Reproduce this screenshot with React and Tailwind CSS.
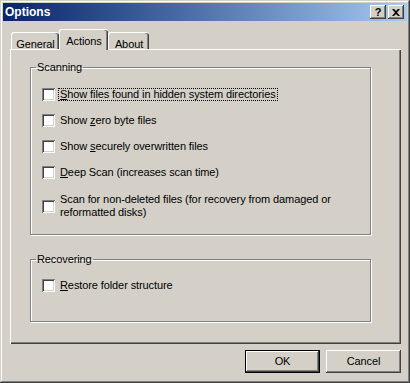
import React from 'react';

const raised =
  'shadow-[inset_-1px_-1px_0_#404040,inset_1px_1px_0_#ffffff,inset_-2px_-2px_0_#808080]';

const Check = ({ children, focused }) => (
  <div className="flex items-center">
    <span className="w-[13px] h-[13px] shrink-0 bg-white shadow-[inset_1px_1px_0_#808080,inset_-1px_-1px_0_#ffffff,inset_2px_2px_0_#404040,inset_-2px_-2px_0_#d4d0c8]" />
    <span
      className={
        'ml-[3px] px-[1px] leading-[11px] py-0 border border-dotted ' +
        (focused ? 'border-black' : 'border-transparent')
      }
    >
      {children}
    </span>
  </div>
);

const Tab = ({ label, active, width }) => (
  <div
    className={
      'flex justify-center rounded-t-[3px] border-t border-l border-white bg-[#d4d0c8] shadow-[inset_-1px_0_0_#404040,inset_-2px_0_0_#808080] ' +
      width +
      (active ? ' h-[21px] mb-[-1px] pt-[3px]' : ' h-[17px] pt-[3px]')
    }
  >
    {label}
  </div>
);

const Group = ({ title, className, children }) => (
  <fieldset
    className={
      'w-[341px] px-[5px] border border-[#808080] shadow-[1px_1px_0_#ffffff,inset_1px_1px_0_#ffffff] ' +
      className
    }
  >
    <legend className="px-[1px] leading-[13px]">{title}</legend>
    {children}
  </fieldset>
);

export default function App() {
  return (
    <div className="w-[410px] h-[383px] bg-[#d4d0c8] p-[3px] flex flex-col text-[11px] tracking-[-0.1px] text-black [font-family:'Liberation_Sans',Arial,sans-serif] shadow-[inset_-1px_-1px_0_#404040,inset_1px_1px_0_#d4d0c8,inset_-2px_-2px_0_#808080,inset_2px_2px_0_#ffffff]">
      {/* Title bar */}
      <div className="h-[18px] flex items-start justify-between bg-gradient-to-r from-[#0a246a] to-[#a6caf0] pl-[2px] pr-[3px]">
        <span className="text-white font-bold text-[12px] leading-[18px] tracking-normal">Options</span>
        <div className="flex gap-[2px] mt-[2px]">
          <span className={'w-[16px] h-[14px] bg-[#d4d0c8] flex items-center justify-center font-bold text-[11px] leading-none ' + raised}>
            ?
          </span>
          <span className={'w-[16px] h-[14px] bg-[#d4d0c8] flex items-center justify-center ' + raised}>
            <svg width="8" height="7" viewBox="0 0 8 7">
              <path d="M0 0h2l2 2 2-2h2L5 3.5 8 7H6L4 5 2 7H0l3-3.5z" fill="#000" />
            </svg>
          </span>
        </div>
      </div>

      {/* Tabs */}
      <div className="relative z-10 mt-[8px] ml-[8px] h-[20px] flex items-end">
        <Tab label="General" width="w-[48px]" />
        <Tab label="Actions" width="w-[49px]" active />
        <Tab label="About" width="w-[41px]" />
      </div>

      {/* Panel */}
      <div className="ml-[7px] w-[391px] h-[295px] pt-[12px] pl-[20px] shadow-[inset_1px_1px_0_#ffffff,inset_-1px_-1px_0_#404040,inset_-2px_-2px_0_#808080]">
        <Group title="Scanning" className="pt-[14px] pb-[14px]">
          <div className="pl-[6px] flex flex-col gap-[13px]">
            <Check focused>
              <span className="underline">S</span>how files found in hidden system directories
            </Check>
            <Check>
              Show <span className="underline">z</span>ero byte files
            </Check>
            <Check>
              Show <span className="underline">s</span>ecurely overwritten files
            </Check>
            <Check>
              <span className="underline">D</span>eep Scan (increases scan time)
            </Check>
            <Check>
              <span className="block leading-[13px]">
                Scan for non-deleted files (for recovery from damaged or
                <br />
                reformatted disks)
              </span>
            </Check>
          </div>
        </Group>
        <Group title="Recovering" className="mt-[18px] pt-[13px] pb-[29px]">
          <div className="pl-[6px] flex flex-col">
            <Check>
              <span className="underline">R</span>estore folder structure
            </Check>
          </div>
        </Group>
      </div>

      {/* Buttons */}
      <div className="mt-[6px] mr-[6px] flex justify-end gap-[6px]">
        <button className="w-[75px] h-[23px] bg-[#d4d0c8] border border-black shadow-[inset_-1px_-1px_0_#404040,inset_1px_1px_0_#ffffff,inset_-2px_-2px_0_#808080]">
          OK
        </button>
        <button className={'w-[75px] h-[23px] bg-[#d4d0c8] ' + raised}>Cancel</button>
      </div>
    </div>
  );
}
